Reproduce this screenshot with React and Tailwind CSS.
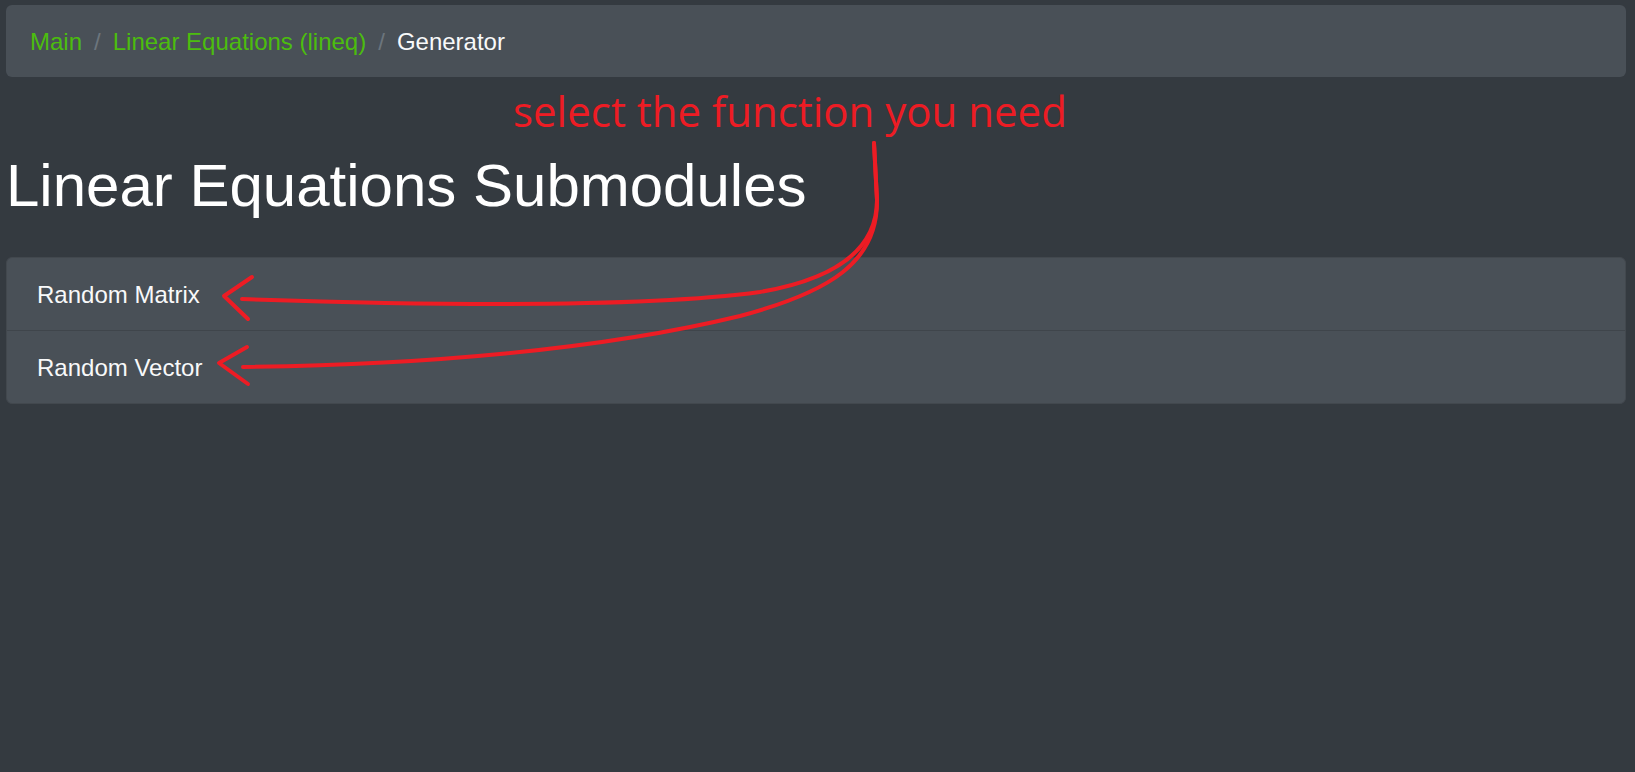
import React from 'react'

const SUBMODULES = ['Random Matrix', 'Random Vector']

const sans = { fontFamily: '"Liberation Sans", Arial, sans-serif' }

function Annotation() {
  return (
    <>
      <div
        className="absolute left-[513px] top-[83px] text-[42px] leading-[56px] text-[#ed1c24] whitespace-nowrap"
        style={{ fontFamily: '"Open Sans", "Noto Sans", sans-serif' }}
      >
        select the function you need
      </div>
      <svg className="absolute inset-0 pointer-events-none" width="1635" height="772" viewBox="0 0 1635 772" fill="none">
        <g stroke="#ed1c24" strokeWidth="4" strokeLinecap="round" strokeLinejoin="round">
          <path d="M874 143 L877 200 C877 252 830 280 760 292 C650 307 450 306 242 299" />
          <path d="M874 143 L877 200 C878 262 830 292 740 316 C600 350 420 365 243 367" />
          <polyline points="252,277 224,296 248,319" />
          <polyline points="247,347 219,363 248,384" />
        </g>
      </svg>
    </>
  )
}

export default function App() {
  return (
    <div className="relative min-h-screen bg-[#343a40] text-white pl-[6px] pr-[9px] pt-[5px]" style={sans}>
      {/* Breadcrumb */}
      <nav className="h-[72px] rounded-[6px] bg-[#495057] px-6 pt-[2px] flex items-center text-[24px] leading-[36px]">
        <a href="#" className="text-[#4cbd0e]">Main</a>
        <span className="px-3 text-[#6c757d]">/</span>
        <a href="#" className="text-[#4cbd0e]">Linear Equations (lineq)</a>
        <span className="px-3 text-[#6c757d]">/</span>
        <span className="text-[#f8f9fa]">Generator</span>
      </nav>

      <h1 className="mt-[73px] text-[60px] leading-[72px] font-normal">Linear Equations Submodules</h1>

      {/* List group */}
      <div className="mt-[35px] rounded-[6px] border border-[#42484e] bg-[#495057] overflow-hidden">
        {SUBMODULES.map((name, i) => (
          <a
            key={name}
            href="#"
            className={`block px-[30px] pt-[19px] pb-[17px] text-[24px] leading-[36px] text-[#f8f9fa] ${i > 0 ? 'border-t border-[#3f454b]' : ''}`}
          >
            {name}
          </a>
        ))}
      </div>

      <Annotation />
    </div>
  )
}
